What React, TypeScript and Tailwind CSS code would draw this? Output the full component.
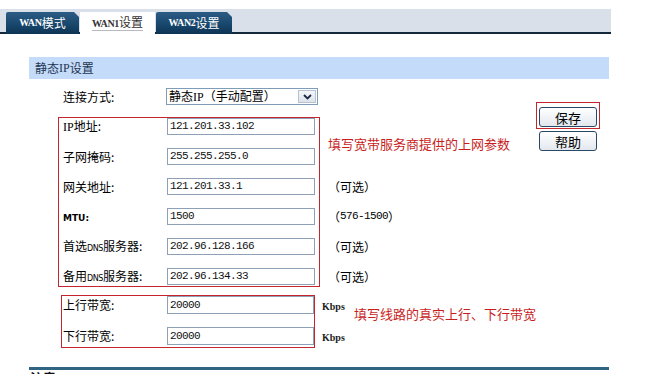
import React from "react";

const cjk = "font-['Noto_Sans_CJK_SC',sans-serif]";

function Input({ value, h = "h-[17px]", w = "w-[148px]" }: { value: string; h?: string; w?: string }) {
  return (
    <div className={`${w} ${h} border border-[#8ea0b6] bg-white flex items-center pl-[2px] font-['Liberation_Mono',monospace] text-[11px] tracking-[-0.6px] text-[#111] leading-none`}>
      {value}
    </div>
  );
}

function Row({ label, value, h, w }: { label: React.ReactNode; value: string; h?: string; w?: string }) {
  return (
    <div className="flex items-center">
      <span className="w-[104px] text-[12px] leading-none text-black whitespace-nowrap">{label}</span>
      <Input value={value} h={h} w={w} />
    </div>
  );
}

function Tab({ children, w, active }: { children: React.ReactNode; w: string; active?: boolean }) {
  if (active) {
    return (
      <div className={`${w} h-[22px] -mb-[2px] bg-white flex items-center justify-center`}>
        <span className="border-b border-[#b8bcc2] pb-[1px] text-[#333] text-[12px] leading-none pt-[1px]">{children}</span>
      </div>
    );
  }
  return (
    <div
      className={`${w} h-[22px] -mb-[2px] bg-gradient-to-b from-[#2c5c84] via-[#1a4a70] to-[#0d3454] text-white text-[12px] leading-none flex items-center justify-center rounded-tl-[2px] [clip-path:polygon(0_0,calc(100%-5px)_0,100%_5px,100%_100%,0_100%)]`}
    >
      {children}
    </div>
  );
}

function Btn({ children }: { children: React.ReactNode }) {
  return (
    <div className="w-[58px] h-[20px] border border-[#2b4966] rounded-[3px] bg-gradient-to-b from-white to-[#e3e8ee] flex items-center justify-center text-[13px] leading-none text-black">
      {children}
    </div>
  );
}

export default function App() {
  const red = "border-[#c4262d]";
  return (
    <div className={`w-[649px] h-[374px] overflow-hidden bg-white ${cjk}`}>
      {/* tab bar */}
      <div className="mt-[9px] w-[611px] h-[25px] bg-[#d9e0e9] border-b-2 border-[#13283a] flex items-end pl-[6px] gap-[1px]">
        <Tab w="w-[73px]">
          <span className="font-['Liberation_Serif',serif] font-bold text-[10px] tracking-[-0.3px]">WAN</span>模式
        </Tab>
        <Tab w="w-[75px]" active>
          <span className="font-['Liberation_Serif',serif] font-bold text-[10px] tracking-[-0.3px]">WAN1</span>设置
        </Tab>
        <Tab w="w-[76px]">
          <span className="font-['Liberation_Serif',serif] font-bold text-[10px] tracking-[-0.3px]">WAN2</span>设置
        </Tab>
      </div>

      {/* section header */}
      <div className="mt-[23px] ml-[29px] w-[580px] h-[22px] bg-[#c5dbfa] flex items-center pl-[6px] text-[12px] text-[#1e3652] leading-none">
        静态<span className="font-['Liberation_Serif',serif] text-[12px]">IP</span>设置
      </div>

      {/* form */}
      <div className="mt-[9px] ml-[58px] flex">
        <div className="w-[478px] flex flex-col">
          {/* select row */}
          <div className="flex items-center h-[17px] pl-[5px]">
            <span className="w-[103px] text-[12px] leading-none text-black">连接方式:</span>
            <div className="w-[152px] h-[17px] border border-[#7f9db9] bg-white flex items-center justify-between pl-[2px] pr-[1px]">
              <span className="text-[12px] leading-none text-black whitespace-nowrap">静态<span className="font-['Liberation_Serif',serif]">IP</span>（手动配置）</span>
              <div className="w-[18px] h-[13px] bg-gradient-to-b from-[#f4f6f9] to-[#dde3ea] border border-[#b7c2d2] flex items-center justify-center">
                <svg width="9" height="6" viewBox="0 0 9 6">
                  <polyline points="1,1 4.5,4.5 8,1" fill="none" stroke="#1d2a44" strokeWidth="1.8" />
                </svg>
              </div>
            </div>
          </div>

          {/* box 1 */}
          <div className="mt-[12px] flex">
            <div className={`w-[262px] border ${red} pl-[4px] pb-[1px] flex flex-col gap-[13px]`}>
              <Row label={<><span className="font-['Liberation_Serif',serif]">IP</span>地址:</>} value="121.201.33.102" />
              <Row label="子网掩码:" value="255.255.255.0" />
              <Row label="网关地址:" value="121.201.33.1" />
              <Row label={<span className="font-['DejaVu_Sans',sans-serif] font-bold text-[9px]">MTU:</span>} value="1500" />
              <Row label={<>首选<span className="font-['DejaVu_Sans',sans-serif] text-[8px] tracking-[-0.4px]">DNS</span>服务器:</>} value="202.96.128.166" />
              <Row label={<>备用<span className="font-['DejaVu_Sans',sans-serif] text-[8px] tracking-[-0.4px]">DNS</span>服务器:</>} value="202.96.134.33" />
            </div>
            <div className="pl-[8px] pt-[1px] flex flex-col gap-[13px] text-[12px] leading-none text-black">
              <div className="h-[47px] flex items-center pt-[3px] text-[13px] text-[#c81e1e] whitespace-nowrap">填写宽带服务商提供的上网参数</div>
              <div className="h-[17px] flex items-center">（可选）</div>
              <div className="h-[17px] flex items-center">（<span className="font-['Liberation_Mono',monospace] text-[11px] tracking-[-0.6px]">576-1500</span>）</div>
              <div className="h-[17px] flex items-center">（可选）</div>
              <div className="h-[17px] flex items-center">（可选）</div>
            </div>
          </div>

          {/* box 2 */}
          <div className="mt-[8px] ml-[3px] flex">
            <div className={`w-[255px] border ${red} pl-[1px] pb-[2px] flex flex-col gap-[13px]`}>
              <Row label="上行带宽:" value="20000" h="h-[18px]" w="w-[147px]" />
              <Row label="下行带宽:" value="20000" h="h-[18px]" w="w-[147px]" />
            </div>
            <div className="w-[42px] pl-[7px] pt-[3px] flex flex-col gap-[13px] font-['Liberation_Serif',serif] font-bold text-[10px] leading-none text-[#222]">
              <div className="h-[18px] flex items-center">Kbps</div>
              <div className="h-[18px] flex items-center">Kbps</div>
            </div>
            <div className="pt-[10px] text-[13px] leading-[17px] text-[#c81e1e] whitespace-nowrap">填写线路的真实上行、下行带宽</div>
          </div>
        </div>

        {/* buttons */}
        <div className="w-[63px] pt-[14px] flex flex-col">
          <div className={`w-[64px] border ${red} px-[2px] pt-[4px] pb-[1px]`}>
            <Btn>保存</Btn>
          </div>
          <div className="mt-[2px] ml-[3px]">
            <Btn>帮助</Btn>
          </div>
        </div>
      </div>

      {/* bottom */}
      <div className="mt-[19px] ml-[29px] w-[580px] h-[3px] bg-[#2f6581]" />
      <div className="ml-[30px] text-[13px] font-bold leading-none text-[#111] pt-[1px]">注意</div>
    </div>
  );
}
